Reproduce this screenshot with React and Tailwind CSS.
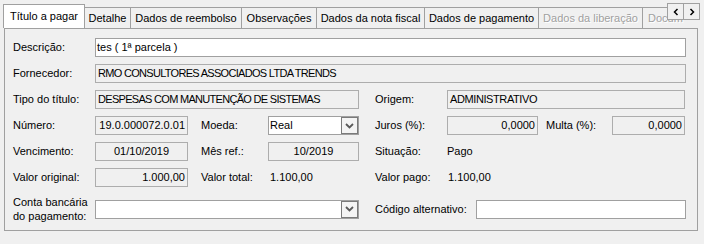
import React from "react";

const Chevron = () => (
  <svg width="9" height="6" viewBox="0 0 9 6" className="block">
    <path d="M1 1 L4.5 4.5 L8 1" fill="none" stroke="#5a5a5a" strokeWidth="1.8" />
  </svg>
);

const Label = ({ w, children, className = "" }) => (
  <div className={`${w} shrink-0 leading-[19px] whitespace-nowrap ${className}`}>{children}</div>
);

const RO = ({ w, children, align = "left", className = "" }) => (
  <div
    className={`${w} h-[19px] shrink-0 border border-[#adadad] bg-[#f0f0f0] flex items-center px-[2px] whitespace-nowrap overflow-hidden ${
      align === "right" ? "justify-end" : align === "center" ? "justify-center" : "justify-start"
    } ${className}`}
  >
    {children}
  </div>
);

const Input = ({ w, children }) => (
  <div className={`${w} h-[19px] shrink-0 border border-[#a0a0a0] bg-white flex items-center px-[1px] whitespace-nowrap overflow-hidden`}>
    {children}
  </div>
);

const Combo = ({ w, children }) => (
  <div className={`${w} h-[19px] shrink-0 border border-[#a0a0a0] bg-white flex items-center`}>
    <div className="flex-1 pl-[1px] whitespace-nowrap overflow-hidden">{children}</div>
    <div className="w-[17px] h-[17px] border border-[#7a7a7a] bg-[#f4f4f4] flex items-center justify-center">
      <Chevron />
    </div>
  </div>
);

const Tab = ({ w, children, selected, disabled, left }) => (
  <div
    className={
      selected
        ? `${w} h-[25px] shrink-0 relative z-10 mb-[-1px] border border-b-0 border-[#a0a0a0] bg-white flex items-center justify-center pb-[2px]`
        : `${w} h-[21px] shrink-0 -ml-px border border-b-0 border-[#a0a0a0] bg-[#f0f0f0] flex items-center whitespace-nowrap overflow-hidden ${
            left ? "justify-start pl-[5px]" : "justify-center"
          }`
    }
  >
    <span className={disabled ? "text-[#a0a0a0] [text-shadow:1px_1px_0_#ffffff]" : ""}>{children}</span>
  </div>
);

export default function App() {
  return (
    <div className="w-[704px] h-[244px] bg-[#f0f0f0] font-['Liberation_Sans',Arial,sans-serif] text-[11px] text-black relative overflow-hidden">
      {/* tabs */}
      <div className="pt-[4px] pl-[3px]">
        <div className="flex items-end h-[24px] w-[697px] overflow-hidden">
          <Tab w="w-[82px]" selected>Título a pagar</Tab>
          <Tab w="w-[47px]">Detalhe</Tab>
          <Tab w="w-[112px]">Dados de reembolso</Tab>
          <Tab w="w-[76px]">Observações</Tab>
          <Tab w="w-[109px]">Dados da nota fiscal</Tab>
          <Tab w="w-[115px]">Dados de pagamento</Tab>
          <Tab w="w-[105px]" disabled>Dados da liberação</Tab>
          <Tab w="w-[80px]" disabled left>Docum</Tab>
        </div>
        {/* panel */}
        <div className="ml-[1px] w-[694px] h-[203px] border border-[#a0a0a0] bg-[#f0f0f0] pl-[8px] pt-[9px]">
          <div className="flex flex-col gap-[7px]">
            <div className="flex">
              <Label w="w-[82px]">Descrição:</Label>
              <Input w="w-[591px]">tes ( 1ª parcela )</Input>
            </div>
            <div className="flex">
              <Label w="w-[82px]">Fornecedor:</Label>
              <RO w="w-[591px]" className="tracking-[-0.7px]">RMO CONSULTORES ASSOCIADOS LTDA TRENDS</RO>
            </div>
            <div className="flex">
              <Label w="w-[82px]">Tipo do título:</Label>
              <RO w="w-[264px]" className="tracking-[-0.7px]">DESPESAS COM MANUTENÇÃO DE SISTEMAS</RO>
              <Label w="w-[72px]" className="ml-[16px]">Origem:</Label>
              <RO w="w-[238px]" className="tracking-[-0.4px]">ADMINISTRATIVO</RO>
            </div>
            <div className="flex">
              <Label w="w-[82px]">Número:</Label>
              <RO w="w-[93px]" align="right">19.0.000072.0.01</RO>
              <Label w="w-[67px]" className="ml-[13px]">Moeda:</Label>
              <Combo w="w-[91px]">Real</Combo>
              <Label w="w-[72px]" className="ml-[16px]">Juros (%):</Label>
              <RO w="w-[91px]" align="right">0,0000</RO>
              <Label w="w-[66px]" className="ml-[8px]">Multa (%):</Label>
              <RO w="w-[73px]" align="right">0,0000</RO>
            </div>
            <div className="flex">
              <Label w="w-[82px]">Vencimento:</Label>
              <RO w="w-[93px]" align="center">01/10/2019</RO>
              <Label w="w-[67px]" className="ml-[13px]">Mês ref.:</Label>
              <RO w="w-[91px]" align="center">10/2019</RO>
              <Label w="w-[72px]" className="ml-[16px]">Situação:</Label>
              <Label w="w-[91px]">Pago</Label>
            </div>
            <div className="flex">
              <Label w="w-[82px]">Valor original:</Label>
              <RO w="w-[93px]" align="right">1.000,00</RO>
              <Label w="w-[67px]" className="ml-[13px]">Valor total:</Label>
              <Label w="w-[91px]" className="pl-[2px]">1.100,00</Label>
              <Label w="w-[72px]" className="ml-[16px]">Valor pago:</Label>
              <Label w="w-[91px]" className="pl-[1px]">1.100,00</Label>
            </div>
            <div className="flex items-center mt-[1px]">
              <div className="w-[82px] shrink-0 leading-[14px]">
                Conta bancária
                <br />
                do pagamento:
              </div>
              <Combo w="w-[264px]"></Combo>
              <Label w="w-[101px]" className="ml-[16px]">Código alternativo:</Label>
              <Input w="w-[210px]"></Input>
            </div>
          </div>
        </div>
      </div>
      {/* scroll buttons */}
      <div className="absolute left-[667px] top-[3px] flex">
        <div className="w-[17px] h-[17px] border border-[#a0a0a0] bg-[#f0f0f0] flex items-center justify-center">
          <svg width="6" height="8" viewBox="0 0 6 8">
            <path d="M4.5 1 L1.5 4 L4.5 7" fill="none" stroke="#000" strokeWidth="1.5" />
          </svg>
        </div>
        <div className="w-[17px] h-[17px] -ml-px border border-[#a0a0a0] bg-[#f0f0f0] flex items-center justify-center">
          <svg width="6" height="8" viewBox="0 0 6 8">
            <path d="M1.5 1 L4.5 4 L1.5 7" fill="none" stroke="#000" strokeWidth="1.5" />
          </svg>
        </div>
      </div>
    </div>
  );
}
